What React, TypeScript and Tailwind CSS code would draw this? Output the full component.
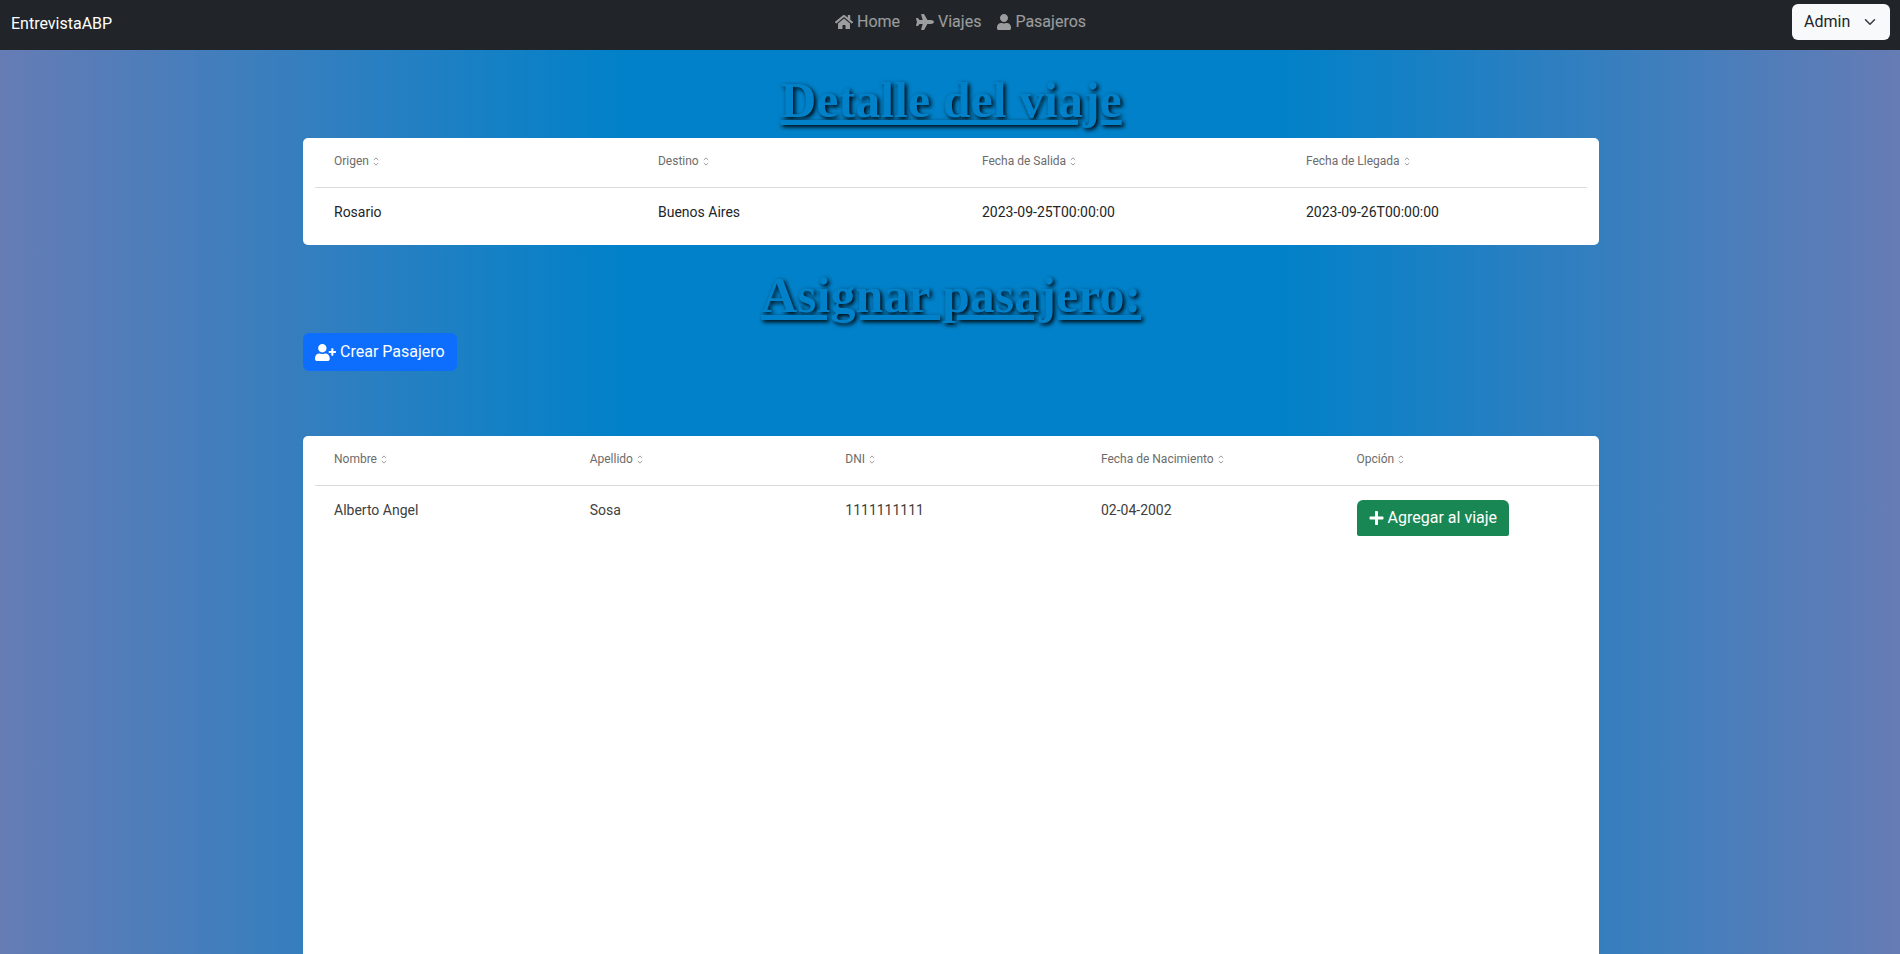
import { FaHome, FaPlane, FaPlus, FaUser, FaUserPlus } from "react-icons/fa";
import type { ReactNode } from "react";

function SortIcon() {
  return (
    <svg
      className="ml-1 inline-block h-[9px] w-[6px] align-[-1px] text-[#9c9c9c]"
      viewBox="0 0 6 9"
      fill="none"
      stroke="currentColor"
      aria-hidden="true"
    >
      <path d="M0.8 3 3 0.9 5.2 3M0.8 6 3 8.1 5.2 6" />
    </svg>
  );
}

type TableProps = {
  label: string;
  columns: string[];
  colClass: string;
  bodyClass: string;
  rows: ReactNode[][];
};

function DataTable({ label, columns, colClass, bodyClass, rows }: TableProps) {
  return (
    <table aria-label={label} className="w-full table-fixed border-separate border-spacing-0">
      <colgroup>
        {columns.map((column, i) => (
          <col key={column} className={i < columns.length - 1 ? colClass : undefined} />
        ))}
      </colgroup>
      <thead>
        <tr>
          {columns.map((column) => (
            <th
              key={column}
              scope="col"
              className="h-[50px] border-b border-[#dadcde] px-[19px] pt-4 text-left align-top text-xs leading-[14px] font-normal text-[#6c6c6c]"
            >
              {column}
              <SortIcon />
            </th>
          ))}
        </tr>
      </thead>
      <tbody>
        {rows.map((row, r) => (
          <tr key={r}>
            {row.map((cell, c) => (
              <td
                key={c}
                className={`px-[19px] pt-[14px] pb-5 align-top text-sm leading-5 ${bodyClass}`}
              >
                {cell}
              </td>
            ))}
          </tr>
        ))}
      </tbody>
    </table>
  );
}

function Title({ children }: { children: ReactNode }) {
  return (
    <h1 className="text-center font-['Liberation_Serif',serif] text-[50px] leading-[60px] font-bold text-[#0081c9] underline [text-shadow:2px_2px_4px_#000]">
      {children}
    </h1>
  );
}

const links = [
  { text: "Home", icon: <FaHome className="size-[18px]" /> },
  { text: "Viajes", icon: <FaPlane className="size-[18px]" /> },
  { text: "Pasajeros", icon: <FaUser className="h-4 w-[14px]" /> },
];

export default function App() {
  return (
    <div className="flex h-screen flex-col overflow-hidden bg-[linear-gradient(to_right,#667cb5,#0081c9_33%,#0081c9_67%,#667cb5)] font-[Roboto,sans-serif] text-base text-[#212529]">
      <header className="grid h-[50px] shrink-0 grid-cols-[1fr_auto_1fr] items-start bg-[#212529] pr-[10px] pl-[11px]">
        <a href="#" className="pt-3 leading-6 text-white">
          EntrevistaABP
        </a>
        <nav className="ml-5 flex gap-4 pt-[10px]">
          {links.map(({ text, icon }) => (
            <a key={text} href="#" className="flex items-center gap-1 leading-6 text-white/55">
              {icon}
              {text}
            </a>
          ))}
        </nav>
        <button
          type="button"
          className="mt-1 flex h-9 w-[98px] items-center justify-between justify-self-end rounded-md bg-[#f8f9fa] pr-[14px] pb-px pl-3"
        >
          Admin
          <svg
            className="size-3"
            viewBox="0 0 16 16"
            fill="none"
            stroke="#343a40"
            strokeWidth="2"
            strokeLinecap="round"
            strokeLinejoin="round"
            aria-hidden="true"
          >
            <path d="m2 5 6 6 6-6" />
          </svg>
        </button>
      </header>

      <main className="mx-auto flex min-h-0 w-full max-w-[1298px] flex-1 flex-col pt-5 pl-[2px]">
        <Title>Detalle del viaje</Title>
        <section className="mt-2 rounded-[5px] bg-white px-3 pb-[3px]">
          <DataTable
            label="Detalle del viaje"
            columns={["Origen", "Destino", "Fecha de Salida", "Fecha de Llegada"]}
            colClass="w-[25.47%]"
            bodyClass="text-[#212529]"
            rows={[["Rosario", "Buenos Aires", "2023-09-25T00:00:00", "2023-09-26T00:00:00"]]}
          />
        </section>

        <div className="mt-5">
          <Title>Asignar pasajero:</Title>
        </div>
        <button
          type="button"
          className="mt-2 flex h-[38px] items-center gap-1 self-start rounded-md bg-[#0d6efd] px-3 text-white"
        >
          <FaUserPlus className="h-[17px] w-[21px]" />
          Crear Pasajero
        </button>

        <section className="mt-[65px] flex-1 rounded-t-[5px] bg-white pl-3">
          <DataTable
            label="Pasajeros"
            columns={["Nombre", "Apellido", "DNI", "Fecha de Nacimiento", "Opción"]}
            colClass="w-[19.91%]"
            bodyClass="text-[#404040]"
            rows={[
              [
                "Alberto Angel",
                "Sosa",
                "1111111111",
                "02-04-2002",
                <button
                  type="button"
                  className="flex h-9 items-center gap-1 rounded-t-md rounded-b-xs bg-[#198754] px-3 text-base whitespace-nowrap text-white"
                >
                  <FaPlus className="h-4 w-[15px]" />
                  Agregar al viaje
                </button>,
              ],
            ]}
          />
        </section>
      </main>
    </div>
  );
}
